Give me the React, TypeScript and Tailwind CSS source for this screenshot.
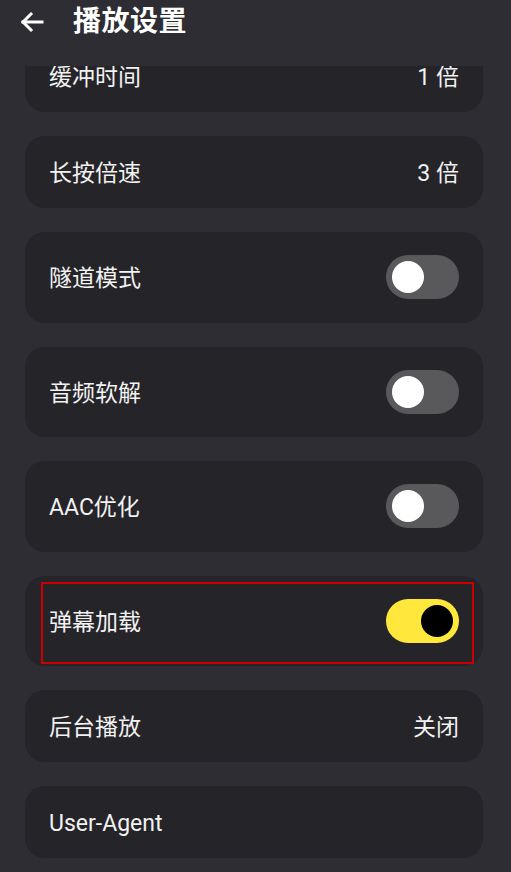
import { ReactNode } from "react";

type Row = {
  label: string;
  value?: string;
  toggle?: boolean;
  on?: boolean;
  highlight?: boolean;
  first?: boolean;
};

const rows: Row[] = [
  { label: "缓冲时间", value: "1 倍", first: true },
  { label: "长按倍速", value: "3 倍" },
  { label: "隧道模式", toggle: true, on: false },
  { label: "音频软解", toggle: true, on: false },
  { label: "AAC优化", toggle: true, on: false },
  { label: "弹幕加载", toggle: true, on: true, highlight: true },
  { label: "后台播放", value: "关闭" },
  { label: "User-Agent" },
];

function Switch({ on }: { on: boolean }) {
  return (
    <div
      className={`w-[73px] h-[44px] rounded-full flex items-center px-[6px] ${
        on ? "bg-[#ffe83b] justify-end" : "bg-[#59595b] justify-start"
      }`}
    >
      <div
        className={`w-[32px] h-[32px] rounded-full ${
          on ? "bg-black" : "bg-white"
        }`}
      />
    </div>
  );
}

function Card({ row }: { row: Row }) {
  let right: ReactNode = null;
  if (row.toggle) right = <Switch on={!!row.on} />;
  else if (row.value)
    right = (
      <span className="pt-[4px] text-[23px] text-[#f2f2f2]">{row.value}</span>
    );

  return (
    <div
      className={`relative shrink-0 ml-[25px] mr-[28px] rounded-[20px] bg-[#252429] flex items-center justify-between pl-[24px] pr-[24px] ${
        row.toggle ? "h-[90.5px]" : "h-[72px]"
      } ${row.first ? "-mt-[26px]" : ""}`}
    >
      <span className="pt-[4px] text-[23px] text-[#f2f2f2]">{row.label}</span>
      {right}
      {row.highlight && (
        <div className="absolute left-[16px] right-[9px] top-[6px] bottom-[2px] border-2 border-[#cc0000] pointer-events-none" />
      )}
    </div>
  );
}

export default function App() {
  return (
    <div
      className="w-[511px] h-[872px] bg-[#2e2d33] flex flex-col overflow-hidden"
      style={{ fontFamily: 'Roboto, "Noto Sans CJK SC", sans-serif' }}
    >
      <div className="h-[66px] shrink-0 relative z-10 bg-[#2e2d33]">
        <div className="h-[44px] flex items-center">
          <svg
            width="24"
            height="22"
            viewBox="0 0 24 22"
            className="ml-[20px]"
            fill="none"
            stroke="#ffffff"
            strokeWidth="3"
            strokeLinecap="square"
          >
            <path d="M22 11H3" />
            <path d="M11 3L3 11l8 8" />
          </svg>
          <h1 className="ml-[29px] text-[28px] font-bold text-white tracking-[0.5px] leading-none">
            播放设置
          </h1>
        </div>
      </div>
      <div className="flex-1 overflow-hidden flex flex-col gap-[24px]">
        {rows.map((row) => (
          <Card key={row.label} row={row} />
        ))}
      </div>
    </div>
  );
}
